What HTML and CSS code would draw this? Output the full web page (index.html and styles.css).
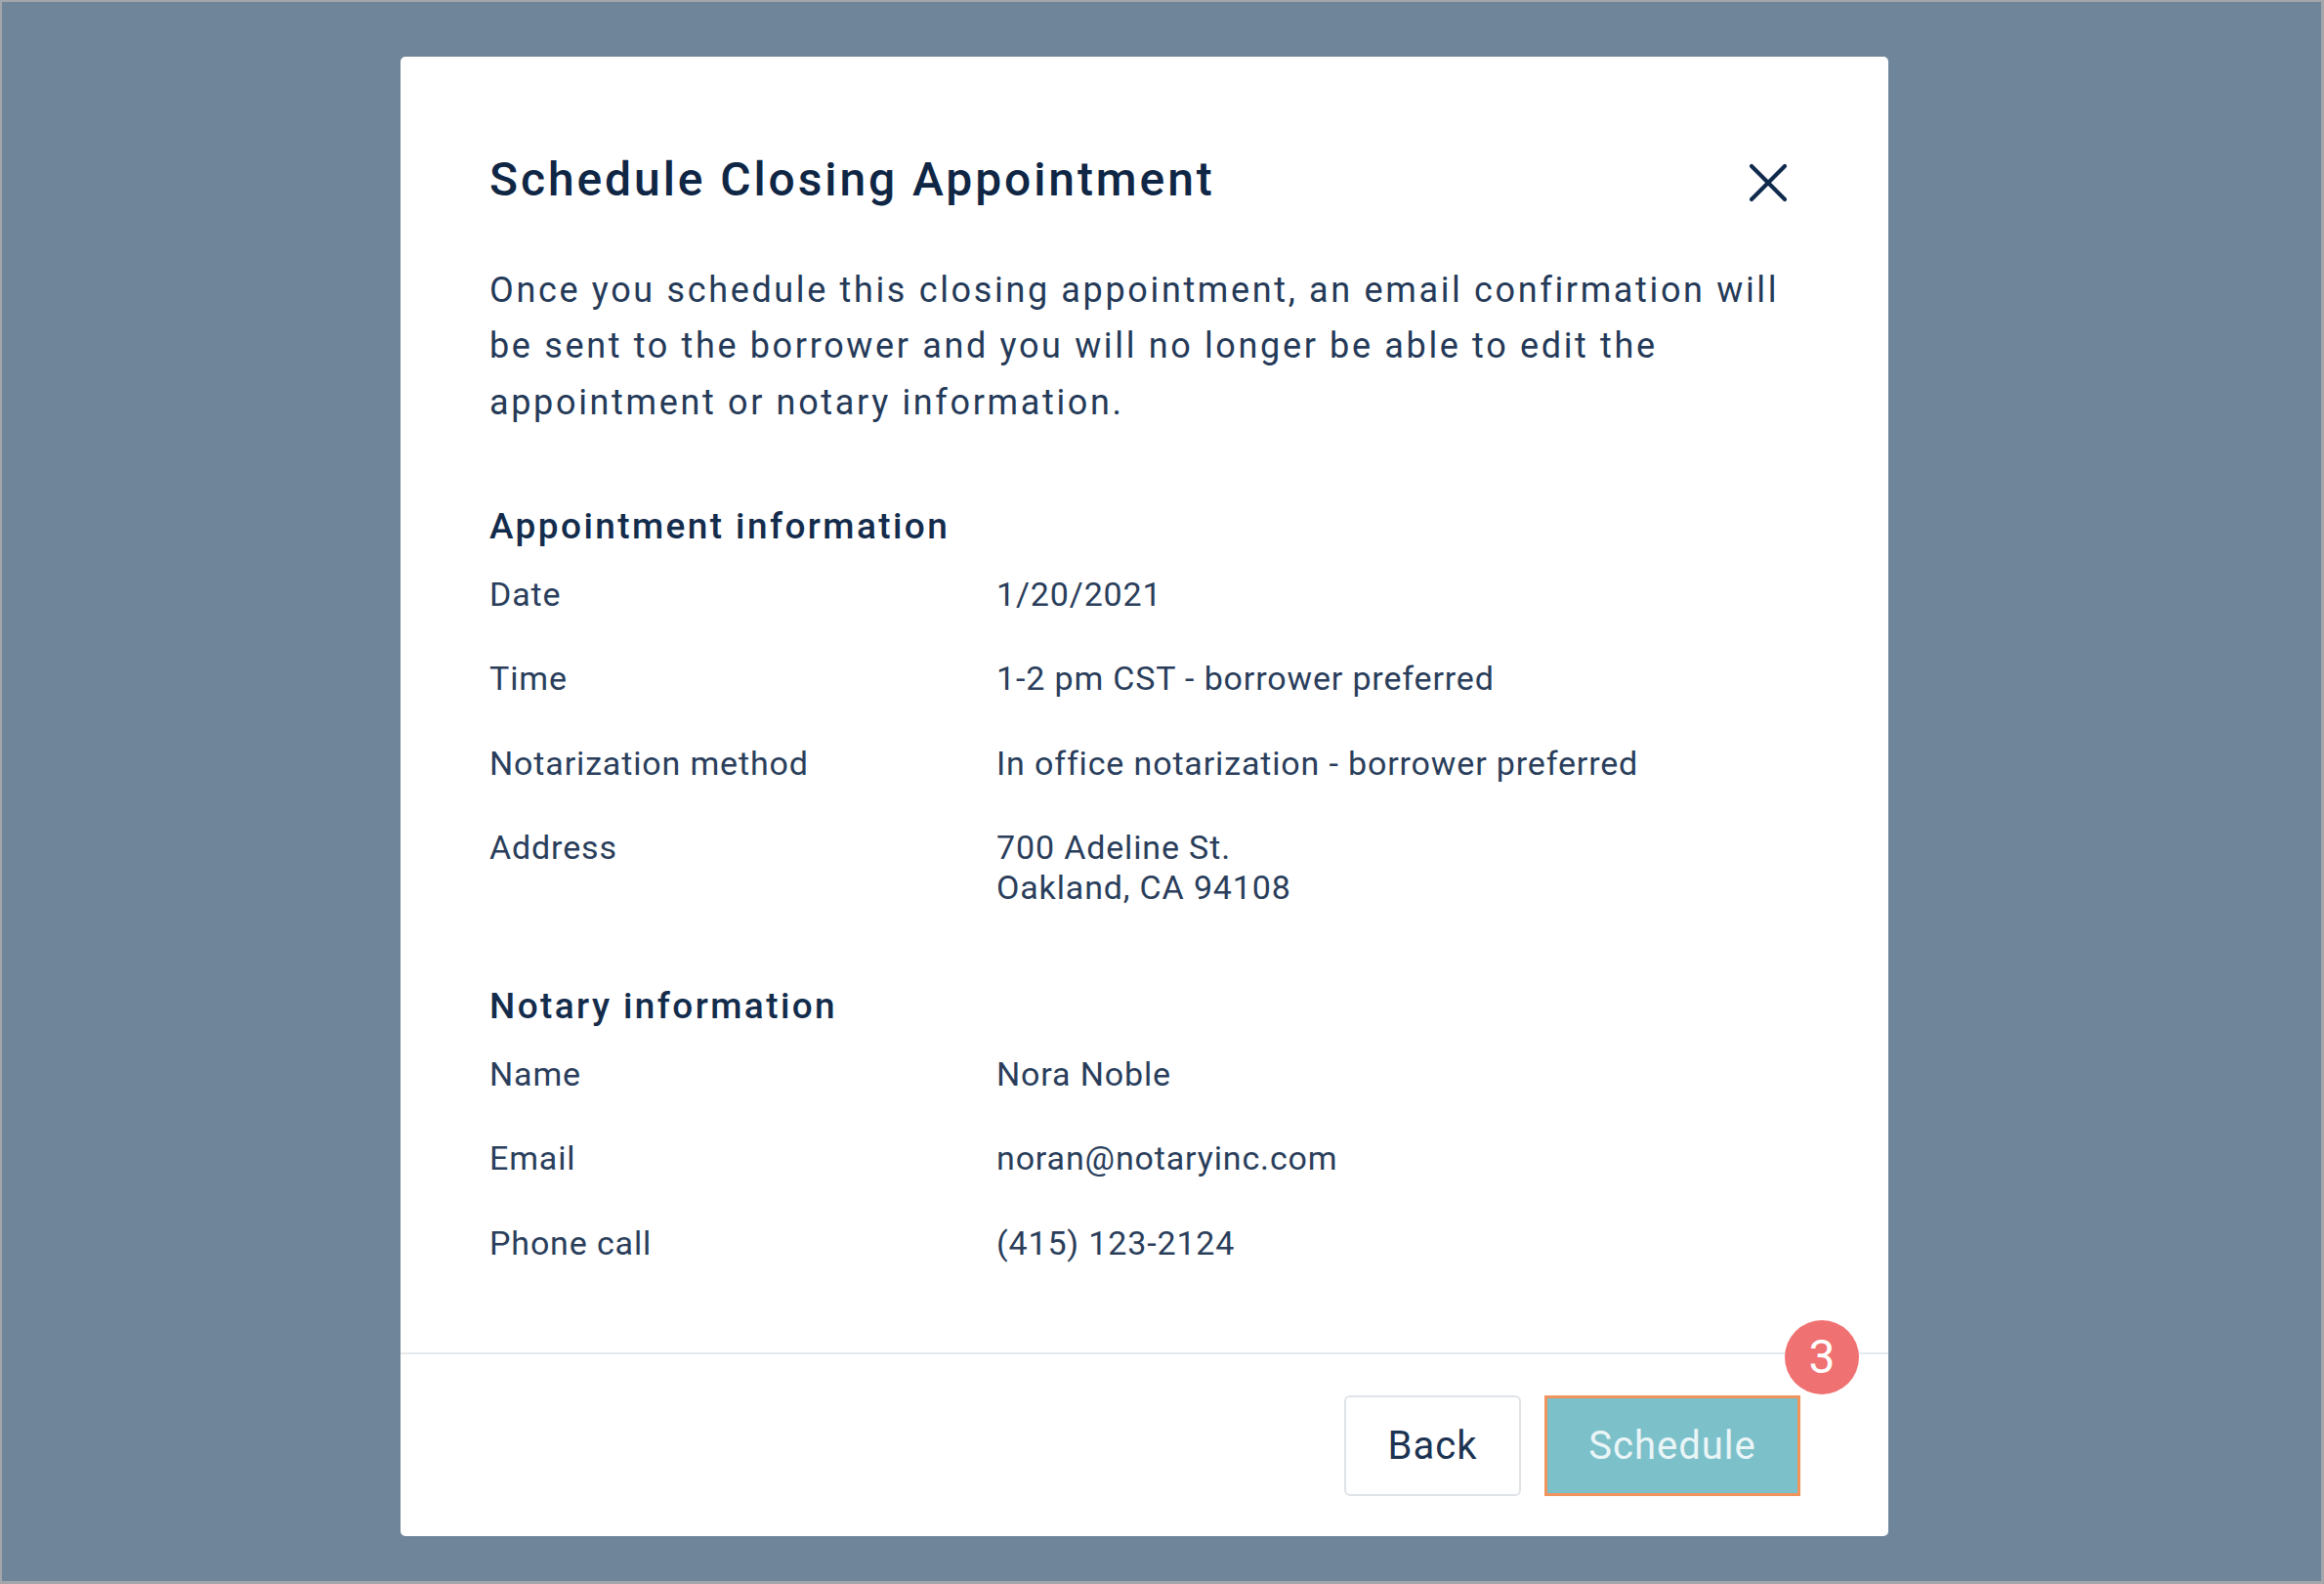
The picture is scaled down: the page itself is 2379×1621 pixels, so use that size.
FILE: index.html
```html
<!DOCTYPE html>
<html lang="en">
<head>
<meta charset="utf-8">
<title>Schedule Closing Appointment</title>
<link rel="stylesheet" href="styles.css">
</head>
<body>
<div class="backdrop">
  <div class="modal">
    <div class="modal-body">
      <div class="modal-header">
        <h1 class="title">Schedule Closing Appointment</h1>
        <button class="close" aria-label="Close">
          <svg viewBox="0 0 40 40" width="40" height="40"><path d="M3 3 L37 37 M37 3 L3 37" stroke="#102a4c" stroke-width="4.2" stroke-linecap="round" fill="none"/></svg>
        </button>
      </div>
      <p class="intro">Once you schedule this closing appointment, an email confirmation will be sent to the borrower and you will no longer be able to edit the appointment or notary information.</p>

      <h2 class="section-title">Appointment information</h2>
      <dl class="info">
        <dt>Date</dt><dd>1/20/2021</dd>
        <dt>Time</dt><dd>1-2 pm CST - borrower preferred</dd>
        <dt>Notarization method</dt><dd>In office notarization - borrower preferred</dd>
        <dt>Address</dt><dd>700 Adeline St.<br>Oakland, CA 94108</dd>
      </dl>

      <h2 class="section-title section-title-next">Notary information</h2>
      <dl class="info">
        <dt>Name</dt><dd>Nora Noble</dd>
        <dt>Email</dt><dd>noran@notaryinc.com</dd>
        <dt>Phone call</dt><dd>(415) 123-2124</dd>
      </dl>
    </div>
    <div class="modal-footer">
      <button class="btn btn-back">Back</button>
      <div class="schedule-wrap">
        <button class="btn btn-schedule">Schedule</button>
        <span class="badge">3</span>
      </div>
    </div>
  </div>
</div>
</body>
</html>
```

FILE: styles.css
```css
* { box-sizing: border-box; }
html, body { margin: 0; padding: 0; height: 100%; }
body {
  font-family: Roboto, "Noto Sans", "Liberation Sans", sans-serif;
  background: #a3a7ab;
}
.backdrop {
  margin: 2px 3px 3px 2px;
  height: calc(100% - 5px);
  background: #6f8599;
  padding-top: 56px;
  padding-left: 408px;
}
.modal {
  width: 1523px;
  background: #ffffff;
  border-radius: 5px;
}
.modal-body {
  padding: 96.5px 90px 91.5px 91px;
}
.modal-header {
  display: flex;
  justify-content: space-between;
  align-items: center;
}
.title {
  margin: 0;
  font-size: 48px;
  line-height: 58px;
  font-weight: 500;
  letter-spacing: 2.9px;
  color: #0f2645;
}
.close {
  border: 0;
  background: none;
  padding: 0;
  margin: 6px 13px 0 0;
  width: 40px;
  height: 40px;
  display: flex;
}
.intro {
  margin: 56px 0 0;
  font-size: 36px;
  line-height: 57.5px;
  letter-spacing: 2.65px;
  color: #253a58;
  max-width: 1345px;
}
.section-title {
  margin: 73.5px 0 0;
  font-size: 37px;
  line-height: 48px;
  font-weight: 500;
  letter-spacing: 2.4px;
  color: #142c4c;
}
.section-title-next {
  margin-top: 76.5px;
}
.info {
  margin: 25px 0 0;
  display: grid;
  grid-template-columns: 519px 1fr;
  row-gap: 45.5px;
  font-size: 34px;
  line-height: 41px;
  letter-spacing: 0.85px;
  color: #2a3e5b;
}
.info dt, .info dd { margin: 0; }
.modal-footer {
  border-top: 2px solid #e6e9ec;
  padding: 42px 90px 41px;
  display: flex;
  justify-content: flex-end;
  gap: 24px;
}
.btn {
  font-family: inherit;
  font-size: 40px;
  letter-spacing: 1px;
  height: 103px;
  cursor: pointer;
}
.btn-back {
  width: 181px;
  background: #fff;
  border: 2px solid #dfe3e7;
  border-radius: 6px;
  color: #1c3352;
}
.schedule-wrap { position: relative; }
.btn-schedule {
  width: 262px;
  background: #7cc0ca;
  border: 3px solid #f0935c;
  border-radius: 0;
  color: #eaf5f7;
}
.badge {
  position: absolute;
  right: -60px;
  top: -77px;
  width: 76px;
  height: 76px;
  border-radius: 50%;
  background: #f07171;
  color: #fff;
  font-size: 48px;
  line-height: 76px;
  text-align: center;
}
```
